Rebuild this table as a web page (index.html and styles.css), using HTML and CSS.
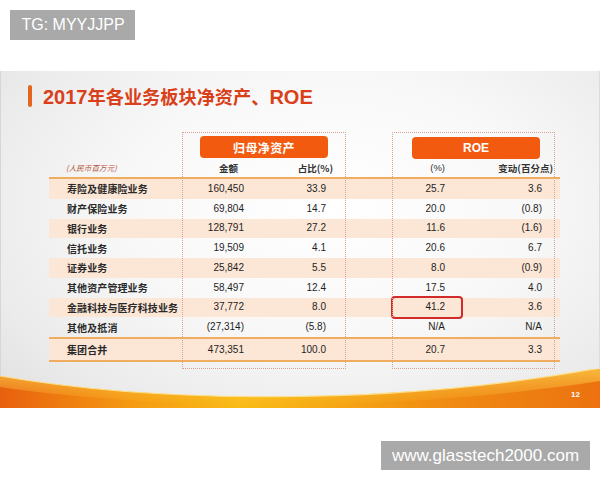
FILE: index.html
```html
<!DOCTYPE html>
<html lang="zh">
<head>
<meta charset="utf-8">
<link rel="stylesheet" href="styles.css">
</head>
<body>
<div class="top">
  <div class="badge tg">TG: MYYJJPP</div>
</div>
<div class="slide">
  <div class="title"><span class="title-bar"></span><h1>2017<span class="cjk">年各业务板块净资产、</span>ROE</h1></div>
  <div class="table-wrap">
    <div class="rows">
      <div class="row head">
        <div class="label unit">(人民币百万元)</div>
        <div class="h h1">金额</div>
        <div class="h h2">占比(%)</div>
        <div></div>
        <div class="h h3">(%)</div>
        <div class="h h4">变动(百分点)</div>
      </div>
      <div class="line"></div>
      <div class="row shade"><div class="label">寿险及健康险业务</div><div class="n c1">160,450</div><div class="n c2">33.9</div><div></div><div class="n c3">25.7</div><div class="n c4">3.6</div></div>
      <div class="row"><div class="label">财产保险业务</div><div class="n c1">69,804</div><div class="n c2">14.7</div><div></div><div class="n c3">20.0</div><div class="n c4">(0.8)</div></div>
      <div class="row shade"><div class="label">银行业务</div><div class="n c1">128,791</div><div class="n c2">27.2</div><div></div><div class="n c3">11.6</div><div class="n c4">(1.6)</div></div>
      <div class="row"><div class="label">信托业务</div><div class="n c1">19,509</div><div class="n c2">4.1</div><div></div><div class="n c3">20.6</div><div class="n c4">6.7</div></div>
      <div class="row shade"><div class="label">证券业务</div><div class="n c1">25,842</div><div class="n c2">5.5</div><div></div><div class="n c3">8.0</div><div class="n c4">(0.9)</div></div>
      <div class="row"><div class="label">其他资产管理业务</div><div class="n c1">58,497</div><div class="n c2">12.4</div><div></div><div class="n c3">17.5</div><div class="n c4">4.0</div></div>
      <div class="row shade"><div class="label">金融科技与医疗科技业务</div><div class="n c1">37,772</div><div class="n c2">8.0</div><div></div><div class="n c3 hl-cell"><div class="hl">41.2</div></div><div class="n c4">3.6</div></div>
      <div class="row"><div class="label">其他及抵消</div><div class="n c1">(27,314)</div><div class="n c2">(5.8)</div><div></div><div class="n c3">N/A</div><div class="n c4">N/A</div></div>
      <div class="line"></div>
      <div class="row shade total"><div class="label">集团合并</div><div class="n c1">473,351</div><div class="n c2">100.0</div><div></div><div class="n c3">20.7</div><div class="n c4">3.3</div></div>
      <div class="line"></div>
    </div>
    <div class="frames">
      <div class="frame f1"><div class="pill">归母净资产</div></div>
      <div class="frame f2"><div class="pill">ROE</div></div>
    </div>
  </div>
  <div class="footer">
    <svg width="600" height="39" viewBox="0 0 600 39" xmlns="http://www.w3.org/2000/svg">
      <defs>
        <linearGradient id="wv" x1="0" y1="0" x2="1" y2="0">
          <stop offset="0" stop-color="#e8600e"/>
          <stop offset="0.22" stop-color="#f59a12"/>
          <stop offset="0.4" stop-color="#f9bb16"/>
          <stop offset="0.55" stop-color="#f6a814"/>
          <stop offset="0.75" stop-color="#f08a12"/>
          <stop offset="1" stop-color="#ec7210"/>
        </linearGradient>
        <linearGradient id="hi" x1="0" y1="0" x2="0" y2="1">
          <stop offset="0" stop-color="#fcd24c" stop-opacity="0.75"/>
          <stop offset="1" stop-color="#fcd24c" stop-opacity="0"/>
        </linearGradient>
      </defs>
      <path d="M0 7 C150 33 380 39 600 -1 L600 39 L0 39 Z" fill="url(#wv)"/>
      <path d="M0 7 C150 33 380 39 600 -1 L600 12 C380 46 150 40 0 18 Z" fill="url(#hi)"/>
      <path d="M0 7 C150 33 380 39 600 -1" fill="none" stroke="#fde08a" stroke-width="1.2"/>
      <text x="571" y="28" class="pageno">12</text>
    </svg>
  </div>
</div>
<div class="bottom">
  <div class="badge www">www.glasstech2000.com</div>
</div>
</body>
</html>
```
FILE: styles.css
```css
* { box-sizing: border-box; }
html, body { margin: 0; padding: 0; background: #fff; }
body {
  width: 600px;
  height: 480px;
  overflow: hidden;
  font-family: "Liberation Sans", "Noto Sans CJK SC", sans-serif;
}
.top {
  height: 71px;
  padding: 10px 0 0 10px;
}
.badge {
  background: #a9a9a9;
  color: #fff;
  font-family: "Liberation Sans", Arial, sans-serif;
  display: flex;
  align-items: center;
  justify-content: center;
}
.tg {
  width: 125px;
  height: 30px;
  font-size: 16px;
  padding-left: 1px;
}
.slide {
  height: 337px;
  display: flex;
  flex-direction: column;
  background: radial-gradient(ellipse 75% 85% at 55% 40%, #ffffff 0%, #f8f8f8 45%, #ebebeb 80%, #e0e0e0 100%);
  border-left: 1px solid #d6d6d6;
  border-right: 1px solid #dcdcdc;
}
.title {
  display: flex;
  align-items: center;
  height: 22px;
  margin-top: 14px;
  padding-left: 27px;
}
.title-bar {
  width: 4px;
  height: 22px;
  border-radius: 2px;
  background: #e4661e;
  margin-right: 11px;
}
.title h1 {
  margin: 0;
  font-size: 20px;
  line-height: 22px;
  font-weight: 700;
  color: #d9401a;
  font-family: "Liberation Sans", "Noto Sans CJK SC", sans-serif;
  white-space: nowrap;
}
.title .cjk {
  font-family: "Noto Sans CJK SC", sans-serif;
  font-size: 18.2px;
}
.table-wrap {
  display: grid;
  grid-template-areas: "stack";
  width: 511px;
  margin: 25px 0 0 48px;
}
.rows {
  grid-area: stack;
  display: flex;
  flex-direction: column;
  padding-top: 26px;
  padding-bottom: 7px;
}
.row {
  display: grid;
  grid-template-columns: 133px 82px 82px 46px 81px 82px 5px;
  height: 19.75px;
  align-items: center;
  font-size: 10px;
  color: #1e1e1e;
}
.row.head { height: 19px; align-items: center; }
.row.total { height: 21px; }
.shade { background: #fce6d5; }
.line { height: 2px; background: #f1ad5f; }
.label {
  padding-left: 18px;
  font-family: "Noto Sans CJK SC", sans-serif;
  font-weight: 700;
  font-size: 10px;
  letter-spacing: 0.1px;
  color: #2a2a2a;
  white-space: nowrap;
}
.unit {
  font-size: 7.5px;
  font-style: italic;
  font-weight: 400;
  color: #b4533c;
  padding-left: 17px;
}
.h {
  text-align: right;
  font-family: "Noto Sans CJK SC", sans-serif;
  font-weight: 700;
  font-size: 9.5px;
  color: #333;
  white-space: nowrap;
}
.h3 { font-family: "Liberation Sans", sans-serif; font-weight: 400; }
.h1 { padding-right: 26px; }
.h2 { padding-right: 13px; }
.h3 { padding-right: 28px; }
.h4 { padding-right: 2px; }
.n {
  text-align: right;
  font-family: "Liberation Sans", Arial, sans-serif;
  font-size: 10px;
  line-height: 12px;
}
.c1 { padding-right: 20px; }
.c2 { padding-right: 20px; }
.c3 { padding-right: 28px; }
.c4 { padding-right: 13px; }
.hl-cell {
  padding-right: 0;
  align-self: stretch;
  display: flex;
}
.hl {
  flex: 0 0 72px;
  margin: -2px 0 -2px -1px;
  border: 2px solid #d22b2b;
  border-radius: 4px;
  display: flex;
  align-items: center;
  justify-content: flex-end;
  padding-right: 16px;
}
.frames {
  grid-area: stack;
  display: grid;
  grid-template-columns: 133px 164px 46px 163px 5px;
}
.frame {
  border: 1px dotted #d9a28e;
}
.f1 { grid-column: 2; padding: 3px 17px 0 17px; }
.f2 { grid-column: 4; padding: 4px 14px 0 19px; }
.pill {
  height: 22px;
  border-radius: 4px;
  background: #f15a0f;
  color: #fff;
  font-weight: 700;
  font-size: 12px;
  display: flex;
  align-items: center;
  justify-content: center;
}
.f1 .pill {
  font-family: "Noto Sans CJK SC", sans-serif;
  letter-spacing: 0.4px;
}
.f2 .pill { font-family: "Liberation Sans", Arial, sans-serif; }
.footer {
  margin-top: auto;
  height: 39px;
  margin-left: -1px;
  margin-right: -1px;
}
.footer svg { display: block; }
.pageno {
  fill: #fff;
  font-family: "Liberation Sans", Arial, sans-serif;
  font-weight: 700;
  font-size: 8px;
}
.bottom {
  display: flex;
  justify-content: flex-end;
  padding: 33px 10px 0 0;
}
.www {
  width: 209px;
  height: 29px;
  font-size: 17px;
}
```
